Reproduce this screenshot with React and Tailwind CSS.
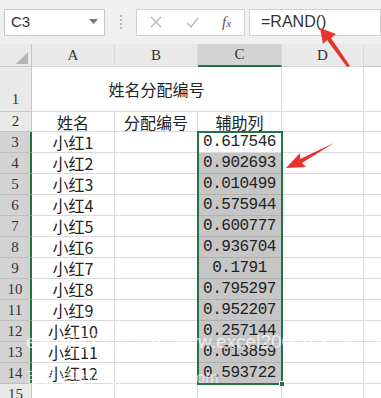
import React from "react";

const rows = [
  ["小红1", "0.617546"],
  ["小红2", "0.902693"],
  ["小红3", "0.010499"],
  ["小红4", "0.575944"],
  ["小红5", "0.600777"],
  ["小红6", "0.936704"],
  ["小红7", "0.1791"],
  ["小红8", "0.795297"],
  ["小红9", "0.952207"],
  ["小红10", "0.257144"],
  ["小红11", "0.013859"],
  ["小红12", "0.593722"],
];

const cjk = { fontFamily: '"Noto Sans CJK SC", sans-serif' };
const serif = { fontFamily: '"Liberation Serif", "DejaVu Serif", serif' };
const mono = { fontFamily: '"Liberation Mono", "DejaVu Sans Mono", monospace' };

function Cell({ w, className = "", children, style }) {
  return (
    <div
      className={`shrink-0 border-r border-b border-[#d9d9d9] flex items-center justify-center overflow-visible whitespace-nowrap ${className}`}
      style={{ width: w, ...style }}
    >
      {children}
    </div>
  );
}

export default function App() {
  return (
    <div className="relative w-[381px] h-[398px] overflow-hidden bg-white text-[#222]">
      {/* formula bar */}
      <div className="h-[44px] bg-[#f0f0f0] flex items-center pl-[4px] gap-0">
        <div className="w-[101px] h-[27px] bg-white border border-[#c8c8c8] flex items-center justify-between px-[6px]">
          <span className="text-[15px] text-[#333]" style={{ fontFamily: '"Liberation Sans", Arial, sans-serif' }}>C3</span>
          <svg width="9" height="6" viewBox="0 0 9 6"><path d="M0 0 L9 0 L4.5 5 Z" fill="#777" /></svg>
        </div>
        <div className="w-[31px] h-[27px] flex items-center justify-center">
          <div className="h-[14px] border-l-2 border-dotted border-[#b8b8b8]" />
        </div>
        <div className="w-[109px] h-[27px] bg-white border border-[#d0d0d0] flex items-center">
          <div className="w-[38px] flex justify-center">
            <svg width="12" height="12" viewBox="0 0 12 12"><path d="M1 1 L11 11 M11 1 L1 11" stroke="#b5b5b5" strokeWidth="1.3" /></svg>
          </div>
          <div className="w-[34px] flex justify-center">
            <svg width="13" height="11" viewBox="0 0 13 11"><path d="M1 6 L5 10 L12 1" stroke="#b5b5b5" strokeWidth="1.3" fill="none" /></svg>
          </div>
          <div className="flex-1 flex justify-center items-baseline italic text-[#555]" style={serif}>
            <span className="text-[15px]">f</span><span className="text-[11px]">x</span>
          </div>
        </div>
        <div className="ml-[4px] flex-1 h-[27px] bg-white border border-[#d0d0d0] flex items-center pl-[11px]">
          <span className="text-[16px] text-[#333]" style={{ fontFamily: '"Liberation Sans", Arial, sans-serif' }}>=RAND()</span>
        </div>
      </div>

      {/* column headers */}
      <div className="flex h-[23px] bg-[#e9e9e9] text-[15px] text-[#333]" style={serif}>
        <div className="w-[32px] shrink-0 border-r border-b border-[#c6c6c6] flex items-end justify-end pr-[3px] pb-[2px]">
          <svg width="12" height="12" viewBox="0 0 12 12"><path d="M12 0 L12 12 L0 12 Z" fill="#b5b5b5" /></svg>
        </div>
        <Cell w={83} className="border-[#c6c6c6]">A</Cell>
        <Cell w={83} className="border-[#c6c6c6]">B</Cell>
        <Cell w={84} className="border-[#c6c6c6] bg-[#d3d3d3] !border-b-2 !border-b-[#217346]">C</Cell>
        <Cell w={82} className="border-[#c6c6c6]">D</Cell>
        <div className="flex-1 border-b border-[#c6c6c6]" />
      </div>

      {/* row 1 */}
      <div className="flex h-[45px]">
        <div className="w-[32px] shrink-0 bg-[#e9e9e9] border-r border-b border-[#c6c6c6] flex items-end justify-center pb-[1px] text-[15px] text-[#333]" style={serif}>1</div>
        <div className="w-[250px] shrink-0 border-r border-b border-[#d9d9d9] flex items-center justify-center text-[16px]" style={cjk}>
          姓名分配编号
        </div>
        <Cell w={82} />
        <div className="flex-1 border-b border-[#d9d9d9]" />
      </div>

      {/* row 2 */}
      <div className="flex h-[20px] text-[16px]" style={cjk}>
        <div className="w-[32px] shrink-0 bg-[#e9e9e9] border-r border-b border-[#c6c6c6] flex items-center justify-center text-[15px] text-[#333]" style={serif}>2</div>
        <Cell w={83}>姓名</Cell>
        <Cell w={83}>分配编号</Cell>
        <Cell w={84}>辅助列</Cell>
        <Cell w={82} />
        <div className="flex-1 border-b border-[#d9d9d9]" />
      </div>

      {/* data rows */}
      {rows.map(([name, val], i) => (
        <div key={i} className="flex h-[21px]">
          <div className="w-[32px] shrink-0 bg-[#d3d3d3] border-r-2 border-r-[#217346] border-b border-b-[#c0c0c0] flex items-center justify-center text-[15px] text-[#333]" style={serif}>{i + 3}</div>
          <Cell w={83} className="text-[16px]" style={cjk}>{name}</Cell>
          <Cell w={83} />
          <Cell w={84} className={`text-[16px] tracking-[-0.5px] ${i === 0 ? "bg-white" : "bg-[#c6c6c6] border-b-[#b0b0b0]"}`} style={mono}>{val}</Cell>
          <Cell w={82} />
          <div className="flex-1 border-b border-[#d9d9d9]" />
        </div>
      ))}
      <div className="flex h-[21px]">
        <div className="w-[32px] shrink-0 bg-[#e9e9e9] border-r border-[#c6c6c6] flex items-center justify-center text-[15px] text-[#333]" style={serif}>15</div>
        <Cell w={83} />
        <Cell w={83} />
        <Cell w={84} />
        <Cell w={82} />
      </div>

      {/* selection outline C3:C14 */}
      <div className="absolute left-[197px] top-[131px] w-[86px] h-[254px] border-2 border-[#217346] pointer-events-none" />
      <div className="absolute left-[279px] top-[381px] w-[6px] h-[6px] bg-[#217346] border border-white" />

      {/* watermark */}
      <div className="absolute left-[26px] top-[328px] text-[19px] text-white/70 whitespace-nowrap" style={{ fontFamily: '"Liberation Sans", Arial, sans-serif' }}>
        excel技巧学习网 www.excel2000(excel.com)
      </div>
      <div className="absolute left-[26px] top-[366px] text-[15px] text-white/60 whitespace-nowrap" style={cjk}>
        百度经验 jingyan.baidu.com
      </div>

      {/* red arrows */}
      <svg className="absolute left-0 top-0 pointer-events-none" width="381" height="398">
        <polygon points="320,28 336,34 331,38 350,66 347,67 327,40 323,44" fill="#e8322e" />
        <polygon points="286,168 300,153 300,159 334,143 302,163 306,167" fill="#e8322e" />
      </svg>
    </div>
  );
}
